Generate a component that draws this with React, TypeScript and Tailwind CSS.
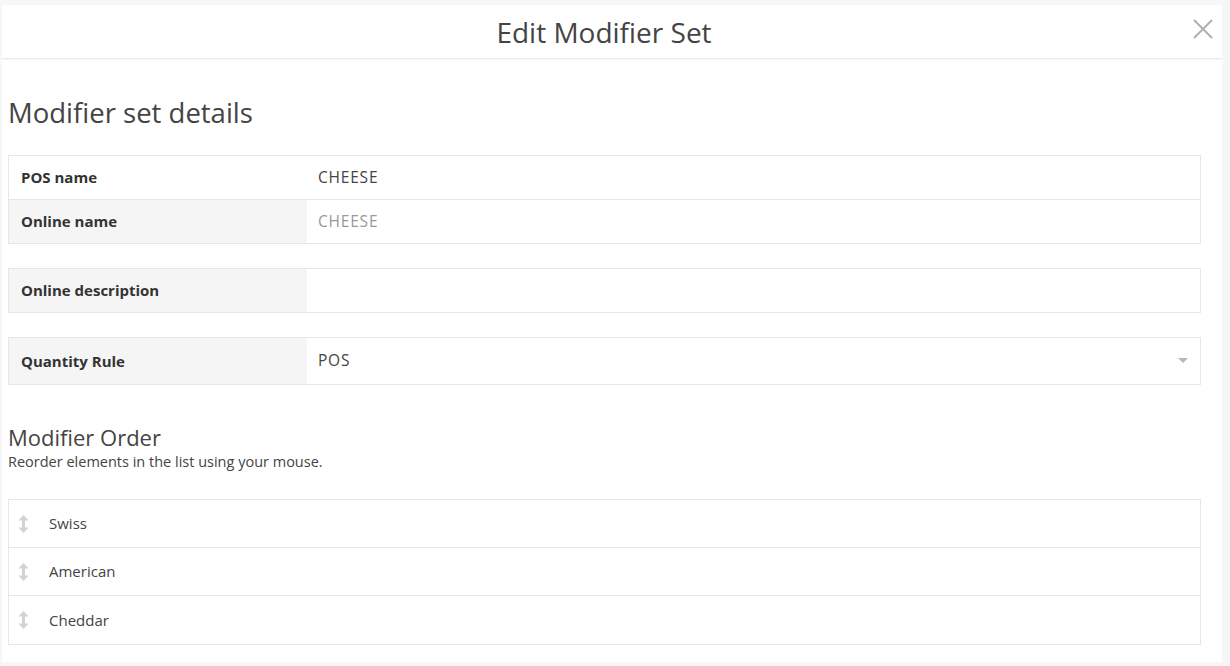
import React from "react";

const font = { fontFamily: "'Open Sans', sans-serif" };

function DragIcon() {
  return (
    <svg width="11" height="18" viewBox="0 0 11 18" className="shrink-0">
      <path d="M5.5 0 L10.5 5.5 H7 V12.5 H10.5 L5.5 18 L0.5 12.5 H4 V5.5 H0.5 Z" fill="#d2d2d2" />
    </svg>
  );
}

function Row({ label, value, labelBg, valueColor, h, last, caret }: { label: string; value?: string; labelBg: string; valueColor?: string; h: string; last?: boolean; caret?: boolean }) {
  return (
    <div className={`flex ${h} ${last ? "" : "border-b border-[#e6e6e6]"}`}>
      <div className={`w-[298px] shrink-0 flex items-center pl-[12px] text-[15px] font-bold text-[#333] ${labelBg}`}>{label}</div>
      <div className={`flex-1 flex items-center pl-[11px] pr-[12px] text-[15.5px] tracking-[0.8px] ${valueColor ?? "text-[#444]"}`}>
        <span className="flex-1">{value}</span>
        {caret && (
          <svg width="10" height="6" viewBox="0 0 10 6"><path d="M0 0 H10 L5 5 Z" fill="#b8b8b8" /></svg>
        )}
      </div>
    </div>
  );
}

export default function App() {
  return (
    <div className="w-[1230px] h-[666px] bg-[#f7f7f7] pt-[5px] pl-[2px] pr-[8px] overflow-hidden" style={font}>
      <div className="h-[54px] bg-white border-b border-[#ebebeb] relative flex items-center justify-center pr-[16px]">
        <span className="text-[28px] leading-[34px] text-[#444]">Edit Modifier Set</span>
        <svg className="absolute right-[9px] top-[14px]" width="20" height="20" viewBox="0 0 20 20">
          <path d="M1 1 L19 19 M19 1 L1 19" stroke="#b0b0b0" strokeWidth="2" />
        </svg>
      </div>
      <div className="mt-[1px] h-[602px] bg-white pl-[6px] pr-[21px]">
        <h2 className="pt-[37px] text-[27.5px] leading-[32px] text-[#444] font-normal">Modifier set details</h2>
        <div className="mt-[26px] border border-[#e6e6e6]">
          <Row label="POS name" value="CHEESE" labelBg="bg-white" h="h-[44px]" />
          <Row label="Online name" value="CHEESE" labelBg="bg-[#f5f5f5]" valueColor="text-[#999]" h="h-[43px]" last />
        </div>
        <div className="mt-[24px] border border-[#e6e6e6]">
          <Row label="Online description" labelBg="bg-[#f5f5f5]" h="h-[43px]" last />
        </div>
        <div className="mt-[24px] border border-[#e6e6e6]">
          <Row label="Quantity Rule" value="POS" labelBg="bg-[#f5f5f5]" h="h-[46px]" last caret />
        </div>
        <h3 className="mt-[37px] text-[22px] leading-[30px] text-[#444] font-normal">Modifier Order</h3>
        <p className="text-[14.5px] leading-[20px] text-[#444]">Reorder elements in the list using your mouse.</p>
        <div className="mt-[27px] border border-[#e6e6e6]">
          {["Swiss", "American", "Cheddar"].map((n, i) => (
            <div key={n} className={`h-[48px] flex items-center pl-[9px] gap-[20px] text-[15px] text-[#444] ${i < 2 ? "border-b border-[#e6e6e6]" : ""}`}>
              <DragIcon />
              <span>{n}</span>
            </div>
          ))}
        </div>
      </div>
    </div>
  );
}
